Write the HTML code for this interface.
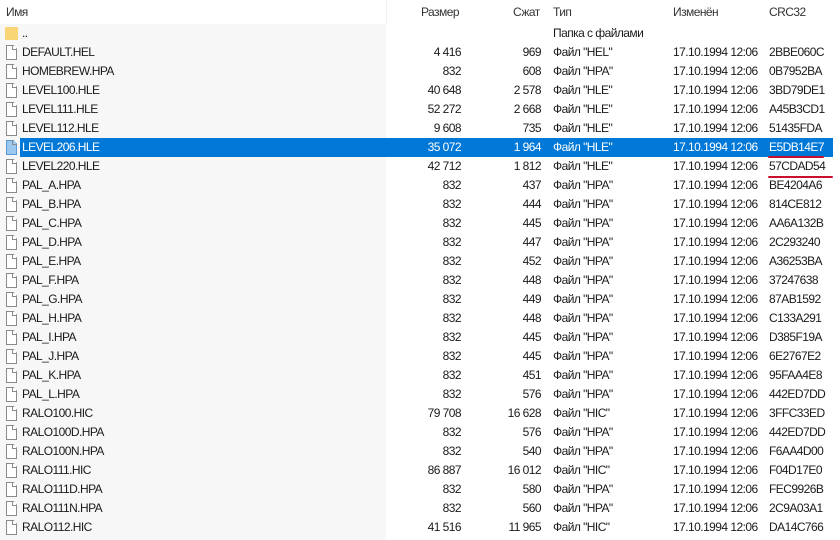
<!DOCTYPE html>
<html><head><meta charset="utf-8"><style>
*{margin:0;padding:0;box-sizing:border-box}
body{width:840px;height:540px;overflow:hidden;background:#fff;font-family:"Liberation Sans","DejaVu Sans",sans-serif;font-size:12px;letter-spacing:-0.55px;color:#1a1a1a;position:relative}
.namebg{position:absolute;left:0;top:24px;width:386px;height:516px;background:#f7f7f7}
.hdr{position:absolute;top:0;left:0;width:840px;height:24px}
.hdr span{position:absolute;top:5px;color:#333}
.sep{position:absolute;top:0;width:1px;height:24px;background:#f0f0f0}
.r{position:absolute;left:0;width:840px;height:19px;line-height:19px}
.r span{position:absolute;top:0;white-space:nowrap}
.n{left:22px}.s{right:379px;text-align:right}.c{right:299px;text-align:right}.t{left:553px}.d{left:673px}.k{left:769px}
.ic{position:absolute;left:6px;top:2px;width:11px;height:15px;border:1px solid #8a8a8a;background:#fff;clip-path:polygon(0 0,70% 0,100% 25%,100% 100%,0 100%)}
.ic:after{content:"";position:absolute;right:-1px;top:-1px;width:4px;height:4px;border-left:1px solid #8a8a8a;border-bottom:1px solid #8a8a8a}
.selbg{position:absolute;left:20px;top:0;width:813px;height:19px;background:#0078d7}
.fold{position:absolute;left:5px;top:3px;width:13px;height:13px;background:#f8d675;border-radius:1px}
.red{position:absolute;height:2px;background:#c8102e;border-radius:1px}
</style></head><body>
<div class="namebg"></div>
<div class="hdr">
<span style="left:6px">Имя</span>
<span style="left:188px;top:-6px;color:#888;font-size:11px">^</span>
<span style="left:421px">Размер</span>
<span style="left:513px">Сжат</span>
<span style="left:553px">Тип</span>
<span style="left:673px">Изменён</span>
<span style="left:769px">CRC32</span>
<div class="sep" style="left:386px"></div>
</div>
<div class="r" style="top:24px"><div class="fold"></div><span class="n">..</span><span class="t">Папка с файлами</span></div>
<div class="r" style="top:43px"><div class="ic"></div><span class="n">DEFAULT.HEL</span><span class="s">4 416</span><span class="c">969</span><span class="t">Файл "HEL"</span><span class="d">17.10.1994 12:06</span><span class="k">2BBE060C</span></div>
<div class="r" style="top:62px"><div class="ic"></div><span class="n">HOMEBREW.HPA</span><span class="s">832</span><span class="c">608</span><span class="t">Файл "HPA"</span><span class="d">17.10.1994 12:06</span><span class="k">0B7952BA</span></div>
<div class="r" style="top:81px"><div class="ic"></div><span class="n">LEVEL100.HLE</span><span class="s">40 648</span><span class="c">2 578</span><span class="t">Файл "HLE"</span><span class="d">17.10.1994 12:06</span><span class="k">3BD79DE1</span></div>
<div class="r" style="top:100px"><div class="ic"></div><span class="n">LEVEL111.HLE</span><span class="s">52 272</span><span class="c">2 668</span><span class="t">Файл "HLE"</span><span class="d">17.10.1994 12:06</span><span class="k">A45B3CD1</span></div>
<div class="r" style="top:119px"><div class="ic"></div><span class="n">LEVEL112.HLE</span><span class="s">9 608</span><span class="c">735</span><span class="t">Файл "HLE"</span><span class="d">17.10.1994 12:06</span><span class="k">51435FDA</span></div>
<div class="r" style="top:138px;color:#fff"><div class="selbg"></div><div class="ic" style="background:#9cc7ee;border-color:#5a9ad8"></div><span class="n">LEVEL206.HLE</span><span class="s">35 072</span><span class="c">1 964</span><span class="t">Файл "HLE"</span><span class="d">17.10.1994 12:06</span><span class="k">E5DB14E7</span></div>
<div class="r" style="top:157px"><div class="ic"></div><span class="n">LEVEL220.HLE</span><span class="s">42 712</span><span class="c">1 812</span><span class="t">Файл "HLE"</span><span class="d">17.10.1994 12:06</span><span class="k">57CDAD54</span></div>
<div class="r" style="top:176px"><div class="ic"></div><span class="n">PAL_A.HPA</span><span class="s">832</span><span class="c">437</span><span class="t">Файл "HPA"</span><span class="d">17.10.1994 12:06</span><span class="k">BE4204A6</span></div>
<div class="r" style="top:195px"><div class="ic"></div><span class="n">PAL_B.HPA</span><span class="s">832</span><span class="c">444</span><span class="t">Файл "HPA"</span><span class="d">17.10.1994 12:06</span><span class="k">814CE812</span></div>
<div class="r" style="top:214px"><div class="ic"></div><span class="n">PAL_C.HPA</span><span class="s">832</span><span class="c">445</span><span class="t">Файл "HPA"</span><span class="d">17.10.1994 12:06</span><span class="k">AA6A132B</span></div>
<div class="r" style="top:233px"><div class="ic"></div><span class="n">PAL_D.HPA</span><span class="s">832</span><span class="c">447</span><span class="t">Файл "HPA"</span><span class="d">17.10.1994 12:06</span><span class="k">2C293240</span></div>
<div class="r" style="top:252px"><div class="ic"></div><span class="n">PAL_E.HPA</span><span class="s">832</span><span class="c">452</span><span class="t">Файл "HPA"</span><span class="d">17.10.1994 12:06</span><span class="k">A36253BA</span></div>
<div class="r" style="top:271px"><div class="ic"></div><span class="n">PAL_F.HPA</span><span class="s">832</span><span class="c">448</span><span class="t">Файл "HPA"</span><span class="d">17.10.1994 12:06</span><span class="k">37247638</span></div>
<div class="r" style="top:290px"><div class="ic"></div><span class="n">PAL_G.HPA</span><span class="s">832</span><span class="c">449</span><span class="t">Файл "HPA"</span><span class="d">17.10.1994 12:06</span><span class="k">87AB1592</span></div>
<div class="r" style="top:309px"><div class="ic"></div><span class="n">PAL_H.HPA</span><span class="s">832</span><span class="c">448</span><span class="t">Файл "HPA"</span><span class="d">17.10.1994 12:06</span><span class="k">C133A291</span></div>
<div class="r" style="top:328px"><div class="ic"></div><span class="n">PAL_I.HPA</span><span class="s">832</span><span class="c">445</span><span class="t">Файл "HPA"</span><span class="d">17.10.1994 12:06</span><span class="k">D385F19A</span></div>
<div class="r" style="top:347px"><div class="ic"></div><span class="n">PAL_J.HPA</span><span class="s">832</span><span class="c">445</span><span class="t">Файл "HPA"</span><span class="d">17.10.1994 12:06</span><span class="k">6E2767E2</span></div>
<div class="r" style="top:366px"><div class="ic"></div><span class="n">PAL_K.HPA</span><span class="s">832</span><span class="c">451</span><span class="t">Файл "HPA"</span><span class="d">17.10.1994 12:06</span><span class="k">95FAA4E8</span></div>
<div class="r" style="top:385px"><div class="ic"></div><span class="n">PAL_L.HPA</span><span class="s">832</span><span class="c">576</span><span class="t">Файл "HPA"</span><span class="d">17.10.1994 12:06</span><span class="k">442ED7DD</span></div>
<div class="r" style="top:404px"><div class="ic"></div><span class="n">RALO100.HIC</span><span class="s">79 708</span><span class="c">16 628</span><span class="t">Файл "HIC"</span><span class="d">17.10.1994 12:06</span><span class="k">3FFC33ED</span></div>
<div class="r" style="top:423px"><div class="ic"></div><span class="n">RALO100D.HPA</span><span class="s">832</span><span class="c">576</span><span class="t">Файл "HPA"</span><span class="d">17.10.1994 12:06</span><span class="k">442ED7DD</span></div>
<div class="r" style="top:442px"><div class="ic"></div><span class="n">RALO100N.HPA</span><span class="s">832</span><span class="c">540</span><span class="t">Файл "HPA"</span><span class="d">17.10.1994 12:06</span><span class="k">F6AA4D00</span></div>
<div class="r" style="top:461px"><div class="ic"></div><span class="n">RALO111.HIC</span><span class="s">86 887</span><span class="c">16 012</span><span class="t">Файл "HIC"</span><span class="d">17.10.1994 12:06</span><span class="k">F04D17E0</span></div>
<div class="r" style="top:480px"><div class="ic"></div><span class="n">RALO111D.HPA</span><span class="s">832</span><span class="c">580</span><span class="t">Файл "HPA"</span><span class="d">17.10.1994 12:06</span><span class="k">FEC9926B</span></div>
<div class="r" style="top:499px"><div class="ic"></div><span class="n">RALO111N.HPA</span><span class="s">832</span><span class="c">560</span><span class="t">Файл "HPA"</span><span class="d">17.10.1994 12:06</span><span class="k">2C9A03A1</span></div>
<div class="r" style="top:518px"><div class="ic"></div><span class="n">RALO112.HIC</span><span class="s">41 516</span><span class="c">11 965</span><span class="t">Файл "HIC"</span><span class="d">17.10.1994 12:06</span><span class="k">DA14C766</span></div>
<div class="red" style="left:768px;top:156px;width:56px"></div>
<div class="red" style="left:768px;top:176px;width:65px"></div>
</body></html>
